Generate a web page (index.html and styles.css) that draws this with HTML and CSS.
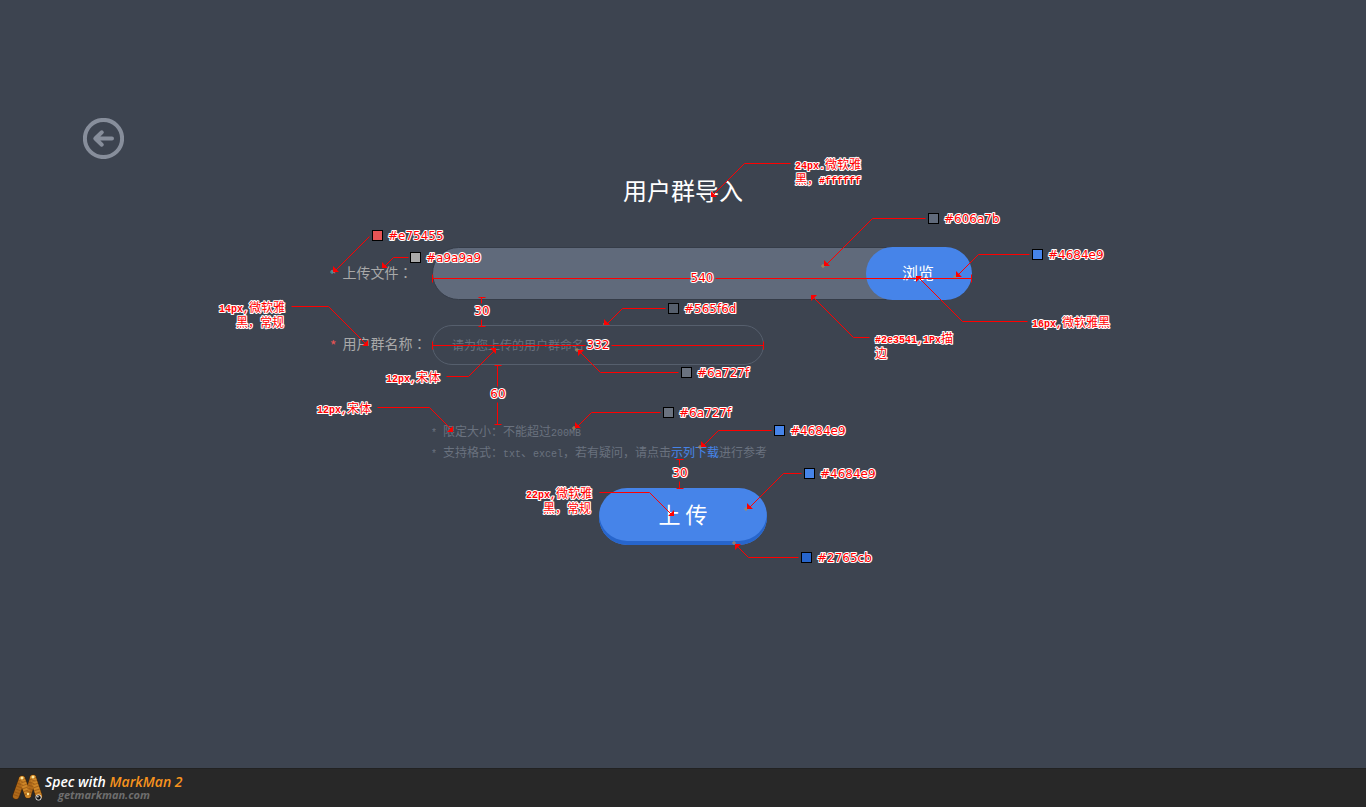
FILE: index.html
```html
<!DOCTYPE html>
<html lang="zh-CN">
<head>
<meta charset="utf-8">
<meta name="viewport" content="width=device-width, initial-scale=1">
<title>用户群导入</title>
<link rel="stylesheet" href="styles.css">
</head>
<body>
<main class="board">
  <header class="topbar">
    <button class="back" type="button" aria-label="返回">
      <svg viewBox="0 0 41 41" aria-hidden="true">
        <circle cx="20.5" cy="20.5" r="18.6"/>
        <path d="M29 20.5H13M18.800 14.300L12.300 20.500L18.800 26.700"/>
      </svg>
    </button>
  </header>

  <h1 class="title">用户群导入</h1>

  <form class="form">
    <div class="row row-file">
      <label class="label" for="file"><span class="required">*</span><span>上传文件<span class="colon" lang="zh-TW">：</span></span></label>
      <div class="file">
        <input class="file-name" id="file" type="text" readonly>
        <button class="browse" type="button">浏览</button>
      </div>
    </div>
    <div class="row row-name">
      <label class="label" for="name"><span class="required">*</span><span>用户群名称<span class="colon" lang="zh-TW">：</span></span></label>
      <input class="name" id="name" type="text" placeholder="请为您上传的用户群命名">
    </div>
    <div class="tips">
      <p><span class="latin">* </span>限定大小：不能超过<span class="latin">200MB</span></p>
      <p><span class="latin">* </span>支持格式：<span class="latin">txt</span>、<span class="latin">excel</span>，若有疑问，请点击<a href="#sample">示列下载</a>进行参考</p>
    </div>
    <button class="submit" type="submit">上 传</button>
  </form>

  <svg class="spec" width="1366" height="768" viewBox="0 0 1366 768">
    <!-- sampled points -->
    <g class="picks">
      <path class="pick-cyan" d="M331 271h2v2h-2z"/>
      <path d="M822 265h2v2h-2zM954 276h2v2h-2zM745 508h2v2h-2zM733 542h2v2h-2z"/>
      <path d="M573 427h2v2h-2zM699 446h2v2h-2zM576 349h2v2h-2zM603 324h2"/>
    </g>
    <!-- leader lines -->
    <g class="lines" transform="translate(.5 .5)">
      <path d="M790 163H744L712 195"/>
      <path d="M369 236L334 271"/>
      <path d="M408 257H393L383 267"/>
      <path d="M291 306H328L366 344"/>
      <path d="M446 376H468L494 350"/>
      <path d="M377 407H429L452 430"/>
      <path d="M665 308H622L606 324"/>
      <path d="M678 372H600L580 352"/>
      <path d="M925 218H872L825 265"/>
      <path d="M1029 254H978L957 275"/>
      <path d="M1027 321H962L918 277"/>
      <path d="M869 337H853L812 296"/>
      <path d="M660 412H591L576 427"/>
      <path d="M771 430H718L702 446"/>
      <path d="M801 473H783L748 508"/>
      <path d="M599 492H649L672 515"/>
      <path d="M798 557H748L737 546"/>
      <!-- dimensions -->
      <path d="M432 274V282M432 278H690M715 278H971M971 274V282"/>
      <path d="M432 341V349M432 345H585M611 345H763M763 341V349"/>
      <path d="M478 297H485M481 297V303M481 319V326M478 326H485"/>
      <path d="M494 365H501M497 365V386M497 402V424M494 424H501"/>
      <path d="M676 459H683M679 459V465M679 481V488M676 488H683"/>
    </g>
    <!-- arrowheads -->
    <g class="heads">
      <path d="M711 197v-6l6 6zM333 272v-6l6 6zM382 268v-6l6 6zM604 325v-6l6 6zM824 266v-6l6 6zM956 277v-6l6 6zM575 428v-6l6 6zM701 447v-6l6 6zM747 509v-6l6 6z"/>
      <path d="M368 346v-6l-6 6zM453 432v-6l-6 6zM674 516v-6l-6 6z"/>
      <path d="M578 350v6l6 -6zM916 276v6l6 -6zM811 295v6l6 -6zM735 544v6l6 -6z"/>
      <path d="M496 348v6l-6 -6z"/>
    </g>
    <!-- colour swatches -->
    <g class="swatches" transform="translate(.5 .5)">
      <rect x="372" y="230" width="10" height="10" fill="#e75455"/>
      <rect x="410" y="252" width="10" height="10" fill="#a9a9a9"/>
      <rect x="928" y="213" width="10" height="10" fill="#606a7b"/>
      <rect x="1032" y="249" width="10" height="10" fill="#4684e9"/>
      <rect x="668" y="303" width="10" height="10" fill="#565f6d"/>
      <rect x="681" y="367" width="10" height="10" fill="#6a727f"/>
      <rect x="663" y="407" width="10" height="10" fill="#6a727f"/>
      <rect x="774" y="425" width="10" height="10" fill="#4684e9"/>
      <rect x="804" y="468" width="10" height="10" fill="#4684e9"/>
      <rect x="801" y="552" width="10" height="10" fill="#2765cb"/>
    </g>
    <g class="codes">
      <text x="388" y="240">#e75455</text>
      <text x="426" y="262">#a9a9a9</text>
      <text x="944" y="223">#606a7b</text>
      <text x="1048" y="259">#4684e9</text>
      <text x="684" y="313">#565f6d</text>
      <text x="697" y="377">#6a727f</text>
      <text x="679" y="417">#6a727f</text>
      <text x="790" y="435">#4684e9</text>
      <text x="820" y="478">#4684e9</text>
      <text x="817" y="562">#2765cb</text>
    </g>
    <g class="codes sizes">
      <text x="702" y="282">540</text>
      <text x="598" y="349">332</text>
      <text x="482" y="315">30</text>
      <text x="498" y="398">60</text>
      <text x="680" y="477">30</text>
    </g>
    <g class="notes">
      <text x="795" y="169"><tspan class="latin">24px.</tspan>微软雅</text>
      <text x="795" y="184">黑，<tspan class="latin">#ffffff</tspan></text>
      <text x="219" y="312"><tspan class="latin">14px,</tspan>微软雅</text>
      <text x="236" y="327">黑，常规</text>
      <text x="386" y="382"><tspan class="latin">12px,</tspan>宋体</text>
      <text x="317" y="413"><tspan class="latin">12px,</tspan>宋体</text>
      <text x="1032" y="327"><tspan class="latin">16px,</tspan>微软雅黑</text>
      <text x="875" y="343"><tspan class="latin">#2e3541,1Px</tspan>描</text>
      <text x="875" y="358">边</text>
      <text x="526" y="498"><tspan class="latin">22px,</tspan>微软雅</text>
      <text x="543" y="513">黑，常规</text>
    </g>
  </svg>
</main>

<footer class="footer">
  <svg class="logo" viewBox="0 0 32 30" aria-hidden="true">
    <g fill="none" stroke-linecap="round">
      <path stroke="#4f2a05" stroke-width="7" d="M4 23L10 6M10 6L16 22M16 22L21 5M21 5L27 23"/>
      <path stroke="#b06a1a" stroke-width="6" d="M4 23L10 6M16 22L21 5"/>
      <path stroke="#cf8728" stroke-width="6" d="M10 6L16 22M21 5L27 23"/>
      <path stroke="#8a4d10" stroke-opacity=".6" stroke-width="6" stroke-linecap="butt" stroke-dasharray="1 2" d="M4 23L10 6M10 6L16 22M16 22L21 5M21 5L27 23"/>
    </g>
    <circle cx="10" cy="5" r="1.500" fill="#ffe79a"/>
    <circle cx="21" cy="4" r="1.500" fill="#ffe79a"/>
    <circle cx="16" cy="21" r="1.200" fill="#ffe79a"/>
    <circle cx="26.500" cy="24.500" r="3" fill="#e8e8e8"/>
    <circle cx="26.500" cy="24.500" r="2.200" fill="#111"/>
    <circle cx="25.900" cy="23.800" r=".8" fill="#fff"/>
  </svg>
  <div class="credit">
    <div class="credit-name">Spec with <span class="brand">MarkMan 2</span></div>
    <div class="credit-site">getmarkman.com</div>
  </div>
</footer>
</body>
</html>
```
FILE: styles.css
```css
* { box-sizing: border-box; }

body {
  margin: 0;
  min-height: 100vh;
  display: flex;
  flex-direction: column;
  background: #3d4450;
  color: #fff;
  font-family: "Noto Sans CJK SC", sans-serif;
}

button, input { font-family: inherit; border: 0; margin: 0; }
button { cursor: pointer; color: #fff; }

.board {
  flex: 1;
  position: relative;
  overflow: hidden;
}

.topbar { padding: 118px 83px 0; display: flex; }

.back {
  width: 41px;
  height: 41px;
  padding: 0;
  background: none;
}
.back svg {
  display: block;
  fill: none;
  stroke: #878e9b;
  stroke-width: 4;
  stroke-linecap: round;
  stroke-linejoin: round;
}

.title {
  margin: 15px 0 41px;
  text-align: center;
  font-size: 24px;
  line-height: 32px;
  font-weight: 400;
}

.form {
  width: 706px;
  max-width: 100%;
  margin: 0 auto;
  display: flex;
  flex-direction: column;
}

.row {
  display: grid;
  grid-template-columns: 102px 1fr;
  align-items: center;
}
.row-name { margin-top: 25px; }

.label {
  display: flex;
  gap: 6px;
  font-size: 14px;
  line-height: 20px;
  color: #a9a9a9;
  white-space: nowrap;
}
.required { color: #e75455; line-height: 24px; }
.colon { font-family: "Noto Sans CJK TC", sans-serif; }

.file {
  display: flex;
  max-width: 540px;
  height: 53px;
  border: 1px solid #353c48;
  border-radius: 27px;
  background: #606a7b;
}
.file-name {
  flex: 1;
  min-width: 0;
  padding: 0 20px;
  background: none;
  color: #fff;
  font-size: 14px;
}
.browse {
  width: 106px;
  margin: -1px;
  padding: 0 8px 4px 6px;
  border-radius: 27px;
  background: #4684e9;
  font-size: 16px;
}

.name {
  width: 100%;
  max-width: 332px;
  height: 40px;
  padding: 0 19px 2px;
  border: 1px solid #565f6d;
  border-radius: 20px;
  background: none;
  color: #fff;
  font-size: 12px;
}
.name::placeholder { color: #6a727f; opacity: 1; }

.tips {
  margin: 55px 0 26px 101px;
  font-size: 12px;
  line-height: 21px;
  color: #6a727f;
}
.tips p { margin: 0; }
.tips a { color: #4684e9; text-decoration: none; }

.latin {
  font-family: "Liberation Mono", monospace;
  font-size: 10px;
  line-height: 1;
}

.submit {
  align-self: center;
  width: 168px;
  height: 57px;
  padding: 0 0 8px;
  border-radius: 28px;
  background: #4684e9;
  box-shadow: inset 0 -4px #2765cb;
  font-size: 22px;
}

.spec {
  position: absolute;
  top: 0;
  left: 50%;
  margin-left: -683px;
  pointer-events: none;
}
.lines { fill: none; stroke: #f00; stroke-width: 1; }
.heads { fill: #f00; }
.swatches { stroke: #000; }
.picks { fill: none; stroke: #a98a5a; }
.pick-cyan { stroke: #37a0a8; }

.codes, .notes {
  fill: #f00;
  stroke: #fff;
  stroke-width: 2px;
  stroke-linejoin: round;
  paint-order: stroke;
  font-size: 12px;
}
.codes { font-family: "DejaVu Sans", sans-serif; }
.sizes { text-anchor: middle; }
.notes .latin { font-weight: 700; }

.footer {
  display: flex;
  align-items: center;
  gap: 1px;
  height: 39px;
  padding: 0 12px;
  border-top: 1px solid #222;
  background: #282828;
  font-family: "Open Sans", sans-serif;
  font-style: italic;
  font-weight: 600;
}
.logo { width: 32px; height: 30px; }
.credit-name { font-size: 14px; line-height: 13px; }
.brand { color: #f7931e; }
.credit-site {
  padding-left: 13px;
  font-size: 11px;
  line-height: 13px;
  font-weight: 700;
  color: #6e6e6e;
}
```
